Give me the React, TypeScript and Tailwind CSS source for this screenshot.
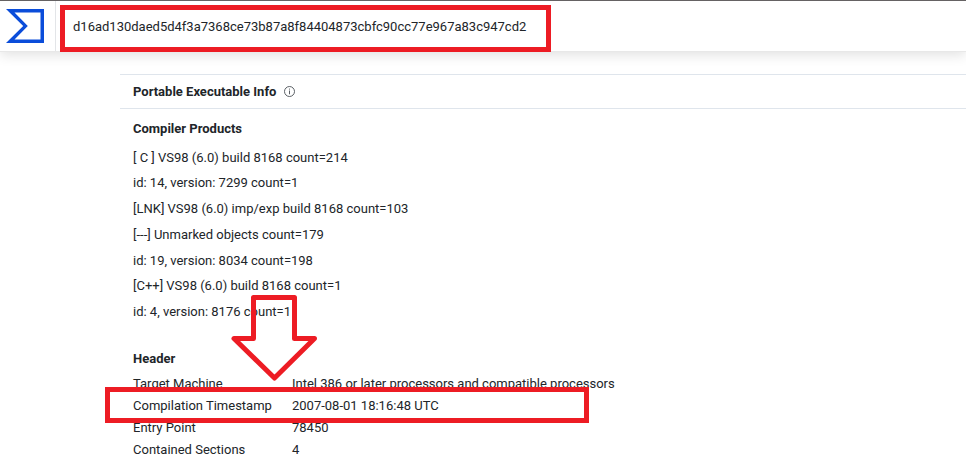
const products = [
  "[ C ] VS98 (6.0) build 8168 count=214",
  "id: 14, version: 7299 count=1",
  "[LNK] VS98 (6.0) imp/exp build 8168 count=103",
  "[---] Unmarked objects count=179",
  "id: 19, version: 8034 count=198",
  "[C++] VS98 (6.0) build 8168 count=1",
  "id: 4, version: 8176 count=1",
];

const header = [
  ["Target Machine", "Intel 386 or later processors and compatible processors"],
  ["Compilation Timestamp", "2007-08-01 18:16:48 UTC"],
  ["Entry Point", "78450"],
  ["Contained Sections", "4"],
];

function Logo() {
  return (
    <svg width="38" height="34" viewBox="0 0 38 34" aria-label="VirusTotal">
      <path fill="#0b4dda" fillRule="evenodd" d="M0 0H38V34H0L17.2 17ZM8.5 3.5L21.8 17L8.5 30.5H34.5V3.5Z" />
    </svg>
  );
}

function InfoIcon() {
  return (
    <svg width="11" height="11" viewBox="0 0 11 11" fill="none" stroke="#4a4f55">
      <circle cx="5.5" cy="5.5" r="5" strokeWidth="0.9" />
      <path d="M5.5 4.5V8.3M5.5 2.6V3.6" strokeWidth="0.9" />
    </svg>
  );
}

export default function App() {
  return (
    <div className="relative h-[468px] w-[966px] overflow-hidden bg-white font-['Roboto','Liberation_Sans',sans-serif] text-[13px] text-[#212529]">
      <header className="flex h-[51px] border-t border-[#656263] bg-white shadow-[0_1px_0_#e8e8e8,0_4px_12px_rgba(0,0,0,0.12)]">
        <div className="flex w-14 border-r border-[#e3e5e8] pt-2 pl-1.5">
          <Logo />
        </div>
        <div className="flex items-center pt-0.5 pl-[17px]">
          <span className="whitespace-nowrap">d16ad130daed5d4f3a7368ce73b87a8f84404873cbfc90cc77e967a83c947cd2</span>
        </div>
      </header>

      <main className="mt-[23px] ml-[120px]">
        <div className="flex h-[35px] items-center gap-2 border-y border-[#dfe5ec] pl-[13px]">
          <h2 className="font-bold">Portable Executable Info</h2>
          <InfoIcon />
        </div>
        <section className="pt-[9px] pl-[13px]">
          <h3 className="h-[21px] leading-[21px] font-bold">Compiler Products</h3>
          <ul className="pt-[5.6px]">
            {products.map((line) => (
              <li key={line} className="h-[25.74px] leading-[25.74px] whitespace-pre">{line}</li>
            ))}
          </ul>
        </section>
        <section className="pt-[24.4px] pl-[13px]">
          <h3 className="h-[20px] leading-[20px] font-bold">Header</h3>
          <dl className="grid grid-cols-[159px_1fr] pt-1">
            {header.map(([name, value]) => (
              <div key={name} className="contents">
                <dt className="h-[22px] leading-[22px]">{name}</dt>
                <dd className="h-[22px] leading-[22px]">{value}</dd>
              </div>
            ))}
          </dl>
        </section>
      </main>

      <div className="absolute top-[5px] left-[60px] h-[47px] w-[491px] border-[5px] border-[#ed1c24]" />
      <svg className="absolute top-[290px] left-[226px]" width="96" height="96" viewBox="226 290 96 96">
        <path
          d="M253.5 297.5H294.5V338.5H314.5L274.5 378L234 338.5H253.5Z"
          fill="none"
          stroke="#ed1c24"
          strokeWidth="5"
          strokeLinejoin="round"
        />
      </svg>
      <div className="absolute top-[387px] left-[105px] h-[36px] w-[484px] border-[5px] border-[#ed1c24]" />
    </div>
  );
}
